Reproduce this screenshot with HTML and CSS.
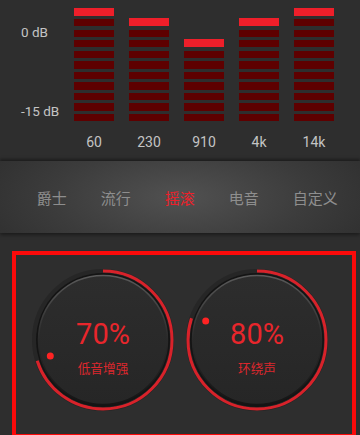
FILE: index.html
```html
<!DOCTYPE html>
<html lang="zh-CN">
<head>
    <meta charset="UTF-8">
    <meta name="viewport" content="width=device-width, initial-scale=1.0">
    <title>均衡器</title>
    <link rel="stylesheet" href="styles.css">
</head>
<body>
    <div class="eq">
        <div class="scale">
            <span class="db top">0 dB</span>
            <span class="db">-15 dB</span>
        </div>
        <div class="bands" id="bands"></div>
    </div>

    <div class="presets">
        <span class="preset">爵士</span>
        <span class="preset">流行</span>
        <span class="preset active">摇滚</span>
        <span class="preset">电音</span>
        <span class="preset">自定义</span>
    </div>

    <div class="knobs">
        <svg class="knob" width="150" height="150" viewBox="0 0 150 150">
            <defs>
                <linearGradient id="rim" x1="0" y1="0" x2="0" y2="1">
                    <stop offset="0" stop-color="#5a5a5a"/>
                    <stop offset="0.5" stop-color="#2a2a2a"/>
                    <stop offset="1" stop-color="#151515"/>
                </linearGradient>
                <linearGradient id="face" x1="0" y1="0" x2="0" y2="1">
                    <stop offset="0" stop-color="#2d2d2d"/>
                    <stop offset="1" stop-color="#262626"/>
                </linearGradient>
            </defs>
            <circle cx="75" cy="75" r="69" fill="none" stroke="#262626" stroke-width="4"/>
            <circle cx="75" cy="75" r="69" fill="none" stroke="#d8222a" stroke-width="3"
                    stroke-dasharray="303.5 433.5" transform="rotate(-90 75 75)"/>
            <circle cx="75" cy="75" r="67" fill="#141414"/>
            <circle cx="75" cy="75" r="64.5" fill="url(#face)" stroke="url(#rim)" stroke-width="1.5"/>
            <circle class="dot" cx="22.3" cy="91" r="3.5"/>
            <text class="pct" x="75" y="78.5">70%</text>
            <text class="name" x="75" y="107.5">低音增强</text>
        </svg>
        <svg class="knob" width="150" height="150" viewBox="0 0 150 150">
            <circle cx="75" cy="75" r="69" fill="none" stroke="#262626" stroke-width="4"/>
            <circle cx="75" cy="75" r="69" fill="none" stroke="#d8222a" stroke-width="3"
                    stroke-dasharray="346.8 433.5" transform="rotate(-90 75 75)"/>
            <circle cx="75" cy="75" r="67" fill="#141414"/>
            <circle cx="75" cy="75" r="64.5" fill="url(#face)" stroke="url(#rim)" stroke-width="1.5"/>
            <circle class="dot" cx="23.7" cy="56" r="3.5"/>
            <text class="pct" x="75" y="78.5">80%</text>
            <text class="name" x="75" y="107.5">环绕声</text>
        </svg>
    </div>

    <script>
        // segments lit per band (not counting the red cap)
        const bands = [
            { freq: '60', level: 10 },
            { freq: '230', level: 9 },
            { freq: '910', level: 7 },
            { freq: '4k', level: 9 },
            { freq: '14k', level: 10 }
        ];

        const bandsEl = document.getElementById('bands');
        bands.forEach(band => {
            const col = document.createElement('div');
            col.className = 'band';
            let segs = '<div class="seg cap"></div>';
            for (let i = 0; i < band.level; i++) {
                segs += '<div class="seg"></div>';
            }
            col.innerHTML = `
                <div class="meter">${segs}</div>
                <span class="freq">${band.freq}</span>
            `;
            bandsEl.appendChild(col);
        });
    </script>
</body>
</html>
```

FILE: styles.css
```css
:root {
    --bg: #2e2e2e;
    --red: #ee1f2a;
    --seg: #5e0000;
    --text: #c4c4c4;
}
body {
    margin: 0;
    background-color: var(--bg);
    font-family: Roboto, 'Noto Sans CJK SC', sans-serif;
    width: 360px;
    height: 435px;
    overflow: hidden;
}
.eq {
    display: flex;
    height: 161px;
}
.scale {
    width: 53px;
    padding-left: 21px;
    padding-top: 24px;
    display: flex;
    flex-direction: column;
}
.db {
    font-size: 13.5px;
    line-height: 16px;
    color: var(--text);
    white-space: nowrap;
}
.db.top {
    margin-bottom: 62.7px;
}
.bands {
    display: flex;
    gap: 15px;
}
.band {
    width: 40px;
    display: flex;
    flex-direction: column;
    align-items: center;
}
.meter {
    width: 40px;
    height: 121.3px;
    display: flex;
    flex-direction: column;
    justify-content: flex-end;
    gap: 3.25px;
}
.seg {
    height: 7.3px;
    background-color: var(--seg);
}
.seg.cap {
    height: 8px;
    background-color: var(--red);
}
.freq {
    margin-top: 12.7px;
    font-size: 14px;
    line-height: 16px;
    color: var(--text);
}
.presets {
    height: 72px;
    display: flex;
    align-items: center;
    padding-left: 36.7px;
    background: radial-gradient(ellipse 70% 140% at 50% 50%, #515151 0%, #3c3c3c 50%, #2a2a2a 100%);
    box-shadow: 0 -2px 3px rgba(0,0,0,0.35), 0 2px 4px rgba(0,0,0,0.4);
    overflow: hidden;
}
.preset {
    flex: 0 0 64px;
    font-family: 'Noto Sans CJK SC', sans-serif;
    font-size: 15px;
    color: #8e8e8e;
    white-space: nowrap;
}
.preset.active {
    color: var(--red);
}
.knobs {
    margin: 18px 0 0 12px;
    width: 324px;
    height: 169px;
    border: 4px solid #fb0a0a;
    padding: 10px 0 0 12px;
    box-sizing: content-box;
    display: flex;
    gap: 4px;
    align-items: flex-start;
}
.knob {
    display: block;
}
.dot {
    fill: #ff2323;
}
.pct {
    font-family: Roboto, sans-serif;
    font-size: 29px;
    fill: #e8262c;
    text-anchor: middle;
}
.name {
    font-family: 'Noto Sans CJK SC', sans-serif;
    font-size: 12.7px;
    fill: #dc272d;
    text-anchor: middle;
}
```
